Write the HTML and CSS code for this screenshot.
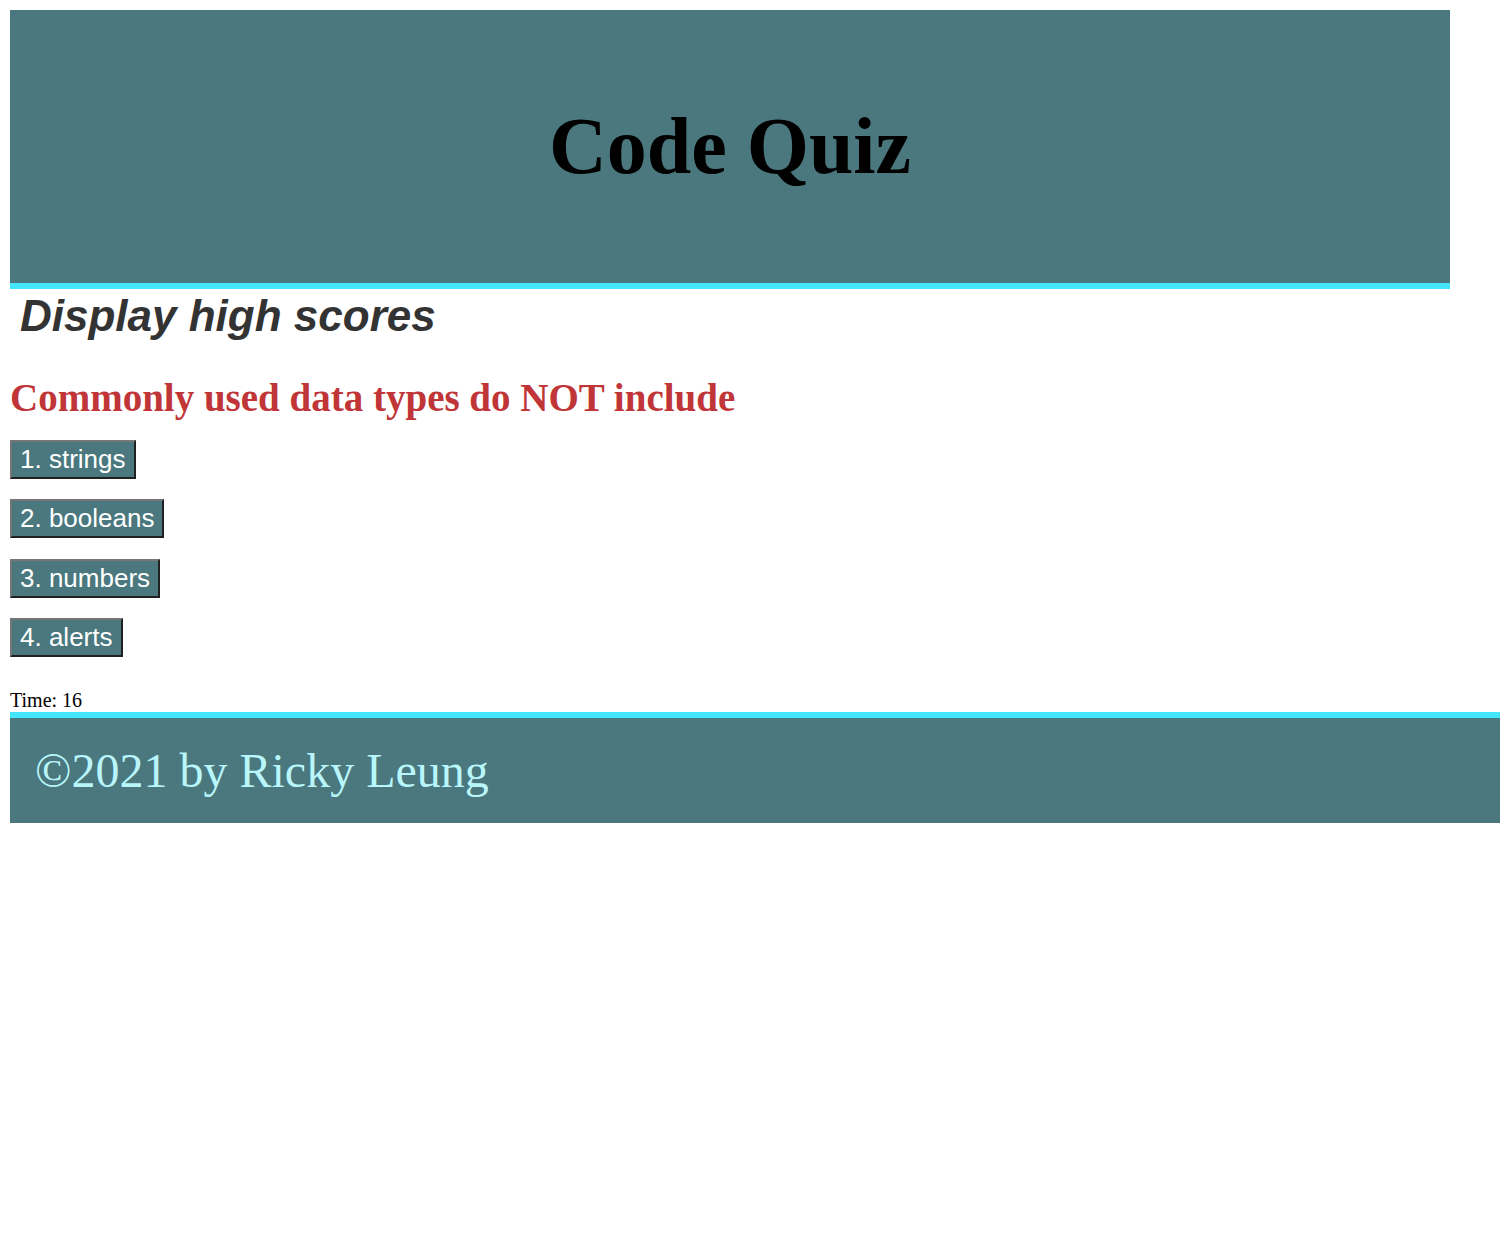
FILE: index.html
```html
<!DOCTYPE html>
<html>
<head>
<meta charset="utf-8">
<title>Code Quiz</title>
<link rel="stylesheet" href="styles.css">
</head>
<body>
<header class="site-header">
  <h1 class="site-title">Code Quiz</h1>
</header>
<a class="high-scores">Display high scores</a>
<main class="quiz">
  <h2 class="question">Commonly used data types do NOT include</h2>
  <div class="choices">
    <button class="choice">1. strings</button>
    <button class="choice">2. booleans</button>
    <button class="choice">3. numbers</button>
    <button class="choice">4. alerts</button>
  </div>
  <p class="timer">Time: 16</p>
</main>
<footer class="site-footer">
  <p class="copyright">©2021 by Ricky Leung</p>
</footer>
</body>
</html>
```
FILE: styles.css
```css
html, body {
  margin: 0;
  padding: 0;
}
body {
  padding: 10px 0 10px 10px;
  font-family: "Liberation Serif", "Times New Roman", serif;
  background: #ffffff;
}
.site-header {
  width: 1440px;
  height: 273px;
  background: #4a787e;
  border-bottom: 6px solid #44e6fc;
  display: flex;
  align-items: center;
  justify-content: center;
}
.site-title {
  margin: 0;
  font-size: 80px;
  font-weight: bold;
  color: #000;
}
.high-scores {
  display: block;
  margin: 2px 0 0 10px;
  font-family: "Liberation Sans", Arial, sans-serif;
  font-style: italic;
  font-weight: bold;
  font-size: 44px;
  color: #333333;
  line-height: 50px;
}
.quiz {
  margin-top: 34px;
}
.question {
  margin: 0;
  font-size: 39px;
  font-weight: bold;
  color: #c03537;
  line-height: 45px;
}
.choices {
  display: flex;
  flex-direction: column;
  align-items: flex-start;
  gap: 20.33px;
  margin-top: 20px;
}
.choice {
  font-family: "Liberation Sans", Arial, sans-serif;
  font-size: 26px;
  color: #ffffff;
  background: #4a787e;
  border: 2px solid;
  border-color: #767676 #202020 #202020 #767676;
  padding: 2px 8px;
  line-height: 31px;
  margin: 0;
}
.timer {
  margin: 32px 0 0 0;
  font-size: 20px;
  line-height: 23px;
}
.site-footer {
  background: #4a787e;
  border-top: 6px solid #44e6fc;
  height: 105px;
  display: flex;
  align-items: center;
  padding-left: 25px;
}
.copyright {
  margin: 0;
  font-size: 48px;
  color: #b9f6fb;
}
```
